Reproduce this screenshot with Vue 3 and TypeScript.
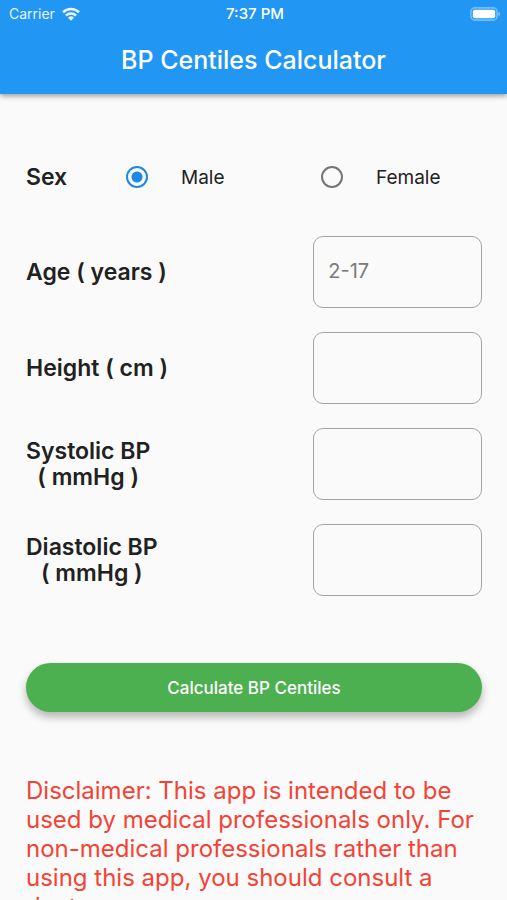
<script setup lang="ts">
import { ref } from 'vue'

type Sex = 'male' | 'female'

interface Field {
  id: string
  lines: string[]
  placeholder: string
}

const sex = ref<Sex>('male')

const options: { value: Sex; label: string }[] = [
  { value: 'male', label: 'Male' },
  { value: 'female', label: 'Female' },
]

const fields: Field[] = [
  { id: 'age', lines: ['Age ( years )'], placeholder: '2-17' },
  { id: 'height', lines: ['Height ( cm )'], placeholder: '' },
  { id: 'systolic', lines: ['Systolic BP', '( mmHg )'], placeholder: '' },
  { id: 'diastolic', lines: ['Diastolic BP', '( mmHg )'], placeholder: '' },
]

const values = ref<Record<string, string>>({ age: '', height: '', systolic: '', diastolic: '' })
</script>

<template>
  <div class="screen">
    <header class="top">
      <div class="status">
        <div class="carrier">
          <span>Carrier</span>
          <svg class="wifi" viewBox="0 0 18 14" aria-hidden="true">
            <g fill="none" stroke="#fff" stroke-width="2.6">
              <path d="M1 5.2a11.6 11.6 0 0 1 16 0" />
              <path d="M3.9 8.6a7.3 7.3 0 0 1 10.2 0" />
            </g>
            <path d="M9 13.8 6 10.8a4.3 4.3 0 0 1 6 0Z" fill="#fff" />
          </svg>
        </div>
        <span class="time">7:37 PM</span>
        <svg class="battery" viewBox="0 0 31 14" aria-hidden="true">
          <rect x="0.9" y="0.9" width="26.2" height="12.2" rx="4" fill="none" stroke="#fff" stroke-opacity=".38" stroke-width="1.6" />
          <rect x="2.8" y="2.8" width="22.4" height="8.4" rx="2" fill="#fff" />
          <path d="M28.4 4.8c2.4.8 2.4 3.6 0 4.4Z" fill="#fff" fill-opacity=".45" />
        </svg>
      </div>
      <h1>BP Centiles Calculator</h1>
    </header>

    <main class="content">
      <form @submit.prevent>
        <div class="sex" role="radiogroup" aria-labelledby="sex-label">
          <span id="sex-label" class="label">Sex</span>
          <label v-for="o in options" :key="o.value" class="option">
            <input v-model="sex" type="radio" name="sex" :value="o.value" />
            <span>{{ o.label }}</span>
          </label>
        </div>

        <div class="fields">
          <div v-for="f in fields" :key="f.id" class="field">
            <label class="label" :for="f.id">
              <span v-for="line in f.lines" :key="line">{{ line }}</span>
            </label>
            <input :id="f.id" v-model="values[f.id]" type="text" inputmode="numeric" :placeholder="f.placeholder" />
          </div>
        </div>

        <button class="submit" type="submit">Calculate BP Centiles</button>
      </form>

      <p class="disclaimer">
        Disclaimer: This app is intended to be used by medical professionals only. For non-medical
        professionals rather than using this app, you should consult a doctor.
      </p>
    </main>
  </div>
</template>

<style>
body {
  margin: 0;
  background: #fafafa;
}
</style>

<style scoped>
.screen {
  display: flex;
  flex-direction: column;
  height: 100vh;
  overflow: hidden;
  background: #fafafa;
  color: #212121;
  font-family: Inter, 'Liberation Sans', sans-serif;
}

.top {
  flex: none;
  position: relative;
  background: #2196f3;
  color: #fff;
  box-shadow: 0 2px 5px rgba(0, 0, 0, 0.38);
}

.status {
  display: grid;
  grid-template-columns: 1fr auto 1fr;
  align-items: center;
  height: 27px;
  padding: 0 6px 0 9px;
  font-size: 14px;
}

.carrier {
  display: flex;
  align-items: center;
  gap: 7px;
  opacity: 0.9;
}

.wifi {
  width: 18px;
  height: 14px;
}

.time {
  font-size: 15px;
  font-weight: 500;
}

.battery {
  justify-self: end;
  width: 31px;
  height: 14px;
}

h1 {
  margin: 0;
  height: 67px;
  font-size: 25px;
  font-weight: 500;
  line-height: 66px;
  text-align: center;
}

.content {
  flex: 1;
  min-height: 0;
  padding: 59px 25px 0 26px;
  overflow-y: auto;
  scrollbar-width: none;
}

.label {
  display: flex;
  flex-direction: column;
  align-items: center;
  font-size: 23px;
  font-weight: 600;
  line-height: 26px;
}

.sex {
  display: grid;
  grid-template-columns: 100px 195px 1fr;
  align-items: center;
  justify-items: start;
  height: 48px;
}

.option {
  display: flex;
  align-items: center;
  gap: 33px;
  font-size: 19px;
}

.option input {
  appearance: none;
  box-sizing: border-box;
  width: 22px;
  height: 22px;
  margin: 0;
  border: 2px solid #757575;
  border-radius: 50%;
}

.option input:checked {
  border-color: #1e88e5;
  background: radial-gradient(circle, #1e88e5 5px, transparent 6px);
}

.fields {
  display: grid;
  gap: 24px;
  margin-top: 35px;
}

.field {
  display: flex;
  align-items: center;
  justify-content: space-between;
}

.field input {
  box-sizing: border-box;
  width: 37%;
  height: 72px;
  padding: 0 14px 2px;
  border: 1px solid #a3a3a3;
  border-radius: 10px;
  background: transparent;
  color: inherit;
  font-family: inherit;
  font-size: 20px;
}

.field input::placeholder {
  color: #7b7b7b;
  opacity: 1;
}

.submit {
  display: block;
  width: 100%;
  height: 49px;
  margin-top: 67px;
  padding: 0;
  border: 0;
  border-radius: 25px;
  background: #4caf50;
  box-shadow: 0 5px 8px rgba(0, 0, 0, 0.28);
  color: #fff;
  font-family: inherit;
  font-size: 17px;
  font-weight: 500;
}

.disclaimer {
  margin: 64px 0 0;
  color: #f44336;
  font-size: 24px;
  line-height: 29px;
}
</style>
